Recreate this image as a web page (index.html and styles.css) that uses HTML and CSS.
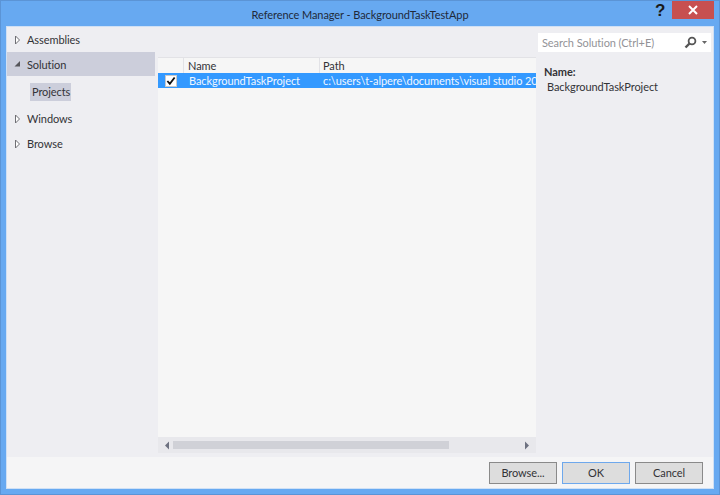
FILE: index.html
```html
<!DOCTYPE html>
<html lang="en">
<head>
<meta charset="utf-8">
<title>Reference Manager</title>
<link rel="stylesheet" href="styles.css">
</head>
<body>
<div class="window">
  <header class="titlebar">
    <div class="title">Reference Manager - BackgroundTaskTestApp</div>
    <div class="help">?</div>
    <div class="close"><svg width="10" height="10" viewBox="0 0 10 10"><path d="M1 1L9 9M9 1L1 9" stroke="#fff" stroke-width="2"/></svg></div>
  </header>
  <div class="client">
    <div class="main">
      <nav class="sidebar">
        <div class="nav-item"><svg class="arrow" width="7" height="10" viewBox="0 0 7 10"><path d="M1.5 1L5.5 5L1.5 9Z" fill="#fff" stroke="#6f6f74"/></svg><span>Assemblies</span></div>
        <div class="nav-item selected"><svg class="arrow" width="7" height="10" viewBox="0 0 7 10"><path d="M0.5 7.5L6 7.5L6 2Z" fill="#55555a"/></svg><span>Solution</span></div>
        <div class="sub-row"><span class="sub-item">Projects</span></div>
        <div class="nav-item"><svg class="arrow" width="7" height="10" viewBox="0 0 7 10"><path d="M1.5 1L5.5 5L1.5 9Z" fill="#fff" stroke="#6f6f74"/></svg><span>Windows</span></div>
        <div class="nav-item"><svg class="arrow" width="7" height="10" viewBox="0 0 7 10"><path d="M1.5 1L5.5 5L1.5 9Z" fill="#fff" stroke="#6f6f74"/></svg><span>Browse</span></div>
      </nav>
      <section class="list">
        <div class="list-top"></div>
        <div class="list-head">
          <div class="col-check"></div>
          <div class="col-name">Name</div>
          <div class="col-path">Path</div>
        </div>
        <div class="list-row">
          <div class="col-check"><span class="checkbox"><svg width="11" height="10" viewBox="0 0 11 10"><path d="M1.5 5L4.2 8L9.5 1.2" fill="none" stroke="#111" stroke-width="2"/></svg></span></div>
          <div class="col-name">BackgroundTaskProject</div>
          <div class="col-path">c:\users\t-alpere\documents\visual studio 20</div>
        </div>
        <div class="list-body"></div>
        <div class="scrollbar">
          <svg class="scroll-arrow" width="6" height="9" viewBox="0 0 6 9"><path d="M5 0.5L1 4.5L5 8.5Z" fill="#6d7180"/></svg>
          <div class="scroll-track"><div class="scroll-thumb"></div></div>
          <svg class="scroll-arrow" width="6" height="9" viewBox="0 0 6 9"><path d="M1 0.5L5 4.5L1 8.5Z" fill="#6d7180"/></svg>
        </div>
      </section>
      <aside class="details">
        <div class="search">
          <span class="search-text">Search Solution (Ctrl+E)</span>
          <svg class="lens" width="13" height="13" viewBox="0 0 13 13"><circle cx="8" cy="5" r="3.4" fill="none" stroke="#555" stroke-width="1.8"/><path d="M5.5 7.5L1.5 11.5" stroke="#555" stroke-width="2.4"/></svg>
          <svg class="caret" width="5" height="3" viewBox="0 0 5 3"><path d="M0 0H5L2.5 3Z" fill="#666"/></svg>
        </div>
        <div class="detail-label">Name:</div>
        <div class="detail-value">BackgroundTaskProject</div>
      </aside>
    </div>
    <footer class="footer">
      <button class="btn">Browse...</button>
      <button class="btn btn-default">OK</button>
      <button class="btn">Cancel</button>
    </footer>
  </div>
</div>
</body>
</html>
```
FILE: styles.css
```css
* { box-sizing: border-box; }
html, body { margin: 0; padding: 0; }
body {
  width: 720px;
  height: 495px;
  overflow: hidden;
  font-family: Lato, "Open Sans", sans-serif;
  font-size: 11px;
  letter-spacing: -0.08px;
  color: #333337;
}
.window {
  width: 720px;
  height: 495px;
  background: #67a9f1;
  border: 1px solid #5b94d6;
  padding: 0 5px 5px 5px;
  display: flex;
  flex-direction: column;
}
.titlebar {
  height: 25px;
  flex: none;
  position: relative;
}
.title {
  text-align: center;
  line-height: 27px;
  color: #1f2a3a;
}
.help {
  position: absolute;
  left: 649px;
  top: 0;
  font-family: "Liberation Sans", sans-serif;
  font-weight: 700;
  font-size: 17px;
  line-height: 19px;
  color: #1a1a1a;
}
.close {
  position: absolute;
  left: 666px;
  top: 0;
  width: 42px;
  height: 18px;
  background: #c75050;
  display: flex;
  align-items: center;
  justify-content: center;
}
.client {
  flex: 1;
  display: flex;
  flex-direction: column;
  background: #f5f5f6;
  border: 1px solid #cfe0f5;
  min-height: 0;
}
.main {
  flex: 1;
  display: flex;
  background: #eeeef2;
  min-height: 0;
}
.sidebar {
  width: 148px;
  flex: none;
  margin-right: 3px;
}
.nav-item {
  height: 25px;
  display: flex;
  align-items: center;
  padding-left: 7px;
  gap: 6px;
}
.nav-item.selected {
  background: #cccedb;
  height: 24px;
}
.sub-row {
  height: 30px;
  padding: 7px 0 0 23px;
  display: flex;
  align-items: flex-start;
}
.sub-item {
  background: #cccedb;
  padding: 0 1px 0 2px;
  line-height: 18px;
  height: 18px;
}
.list {
  width: 378px;
  flex: none;
  display: flex;
  flex-direction: column;
  padding-bottom: 4px;
}
.list-top {
  height: 30px;
  flex: none;
}
.list-head {
  height: 16px;
  flex: none;
  display: flex;
  background: #f6f6f6;
  border-top: 1px solid #e2e2e6;
  line-height: 15px;
}
.list-head .col-name, .list-head .col-check { border-right: 1px solid #e2e2e6; }
.col-check { width: 26px; flex: none; }
.col-name { width: 136px; flex: none; padding-left: 4px; }
.col-path { flex: 1; padding-left: 3px; white-space: nowrap; }
.list-row {
  height: 15px;
  flex: none;
  display: flex;
  align-items: center;
  background: #3399ff;
  color: #f0f7ff;
}
.list-row .col-name { padding-left: 5px; }
.list-row .col-check { display: flex; justify-content: center; padding-right: 1px; }
.checkbox {
  width: 12px;
  height: 12px;
  background: #fff;
  border: 1px solid #c9c9c9;
  display: flex;
  align-items: center;
  justify-content: center;
}
.list-body { flex: 1; background: #f6f6f6; }
.scrollbar {
  height: 16px;
  flex: none;
  background: #e8e8ec;
  display: flex;
  align-items: center;
  padding: 0 6px 0 6px;
  gap: 3px;
}
.scroll-track { flex: 1; height: 8px; }
.scroll-thumb { width: 276px; height: 8px; background: #d0d1d7; }
.details {
  flex: 1;
  padding: 6px 2px 0 2px;
}
.search {
  height: 19px;
  background: #fff;
  display: flex;
  align-items: center;
  padding: 0 4px;
  gap: 3px;
  color: #939397;
}
.search-text { flex: 1; white-space: nowrap; }
.caret { margin-left: 2px; }
.detail-label {
  margin-top: 13px;
  padding-left: 6px;
  font-weight: 700;
  line-height: 14px;
}
.detail-value {
  padding-left: 9px;
  margin-top: 1px;
  line-height: 14px;
}
.footer {
  height: 31px;
  flex: none;
  display: flex;
  justify-content: flex-end;
  align-items: flex-start;
  gap: 5px;
  padding: 5px 10px 0 0;
  background: #f5f5f6;
}
.btn {
  width: 68px;
  height: 22px;
  padding: 0 0 1px;
  font-family: inherit;
  font-size: 11px;
  letter-spacing: inherit;
  color: #333337;
  background: #dddddd;
  border: 1px solid #8a8a8a;
}
.btn-default { border-color: #6ea8ec; }
```
